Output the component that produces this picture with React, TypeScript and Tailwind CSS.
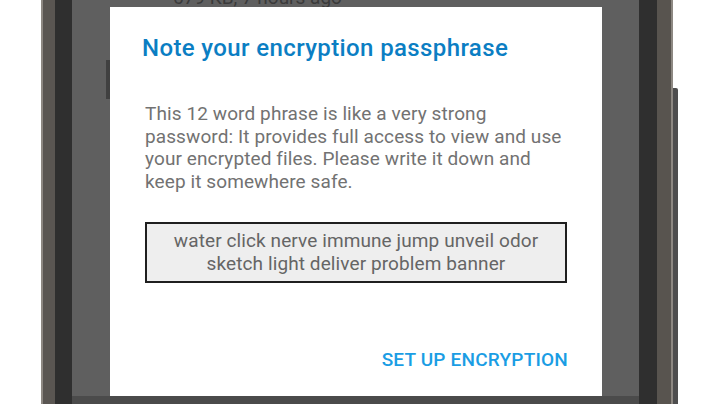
export default function App() {
  return (
    <div className="flex h-[404px] w-[718px] overflow-hidden bg-white font-['Roboto',sans-serif]">
      <div className="w-[41px] shrink-0 bg-white" />
      {/* left bezel */}
      <div className="w-[2px] shrink-0 bg-[#8d8882]" />
      <div className="w-[12px] shrink-0 bg-[#5a5652]" />
      <div className="w-[17px] shrink-0 bg-[#2f2f2f]" />

      {/* screen */}
      <div className="flex w-[567px] shrink-0 flex-col overflow-hidden bg-[#5f5f5f]">
        <div className="flex h-[7px] shrink-0 items-end pl-[101px]">
          <span className="block whitespace-nowrap text-[19px] leading-[18px] text-[#3a3a3a]">
            679 KB, 7 hours ago
          </span>
        </div>
        <div className="flex flex-1 items-start">
          <div className="w-[34px] shrink-0" />
          <div className="mt-[53px] h-[39px] w-[4px] shrink-0 bg-[#404040]" />
          <div className="flex h-[389px] w-[492px] shrink-0 flex-col bg-white pl-[32px] pr-[34px] pt-[27px]">
            <h1 className="text-[24px] font-medium leading-[28px] tracking-[0.38px] text-[#0b7ec3]">
              Note your encryption passphrase
            </h1>
            <p className="mt-[41px] w-[424px] pl-[3px] text-[19px] leading-[22.7px] tracking-[0.1px] text-[#727272]">
              This 12 word phrase is like a very strong password: It provides full access to view and use
              your encrypted files. Please write it down and keep it somewhere safe.
            </p>
            <div className="mt-[28px] ml-[3px] mr-[1px] flex h-[61px] items-center justify-center border-2 border-[#1f1f1f] bg-[#eeeeee] px-2 text-center text-[19px] leading-[23px] tracking-[0.1px] text-[#656565]">
              water click nerve immune jump unveil odor sketch light deliver problem banner
            </div>
            <div className="mt-auto flex justify-end pb-[25px]">
              <button
                type="button"
                className="text-[19px] font-medium uppercase leading-[22px] tracking-[0.2px] text-[#1a9de4]"
              >
                Set up encryption
              </button>
            </div>
          </div>
        </div>
        <div className="h-[8px] shrink-0 bg-[#4b4b4b]" />
      </div>

      {/* right bezel */}
      <div className="w-[18px] shrink-0 bg-[#2f2f2f]" />
      <div className="w-[14px] shrink-0 bg-[#58544f]" />
      <div className="w-[2px] shrink-0 bg-[#8d8882]" />
      <div className="flex flex-1 flex-col bg-white">
        <div className="mt-[88px] h-full w-[5px] rounded-tr-[2px] bg-[#4e4e4e]" />
      </div>
    </div>
  );
}
